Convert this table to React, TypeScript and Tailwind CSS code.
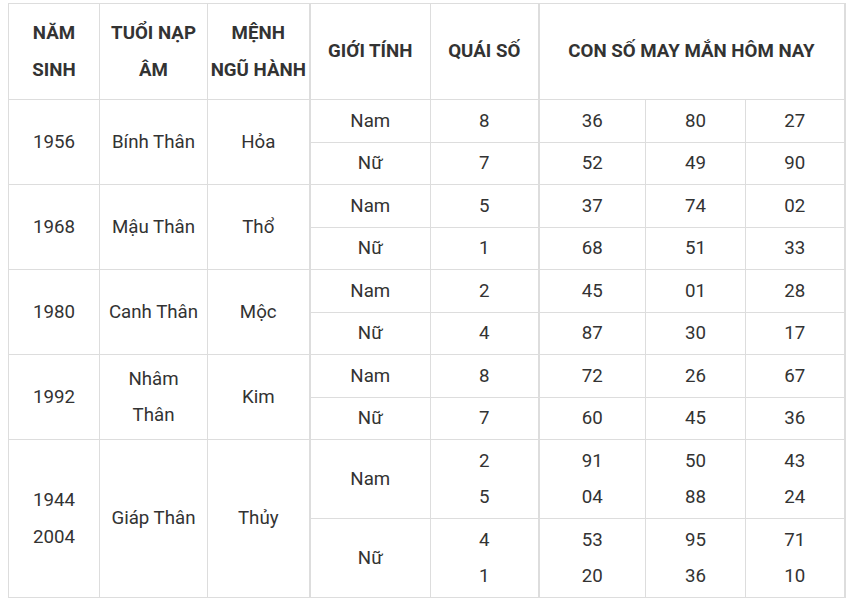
const groups = [
  {
    years: ['1956'],
    napAm: ['Bính Thân'],
    menh: 'Hỏa',
    rows: [
      { gender: 'Nam', quai: ['8'], nums: [['36'], ['80'], ['27']] },
      { gender: 'Nữ', quai: ['7'], nums: [['52'], ['49'], ['90']] },
    ],
  },
  {
    years: ['1968'],
    napAm: ['Mậu Thân'],
    menh: 'Thổ',
    rows: [
      { gender: 'Nam', quai: ['5'], nums: [['37'], ['74'], ['02']] },
      { gender: 'Nữ', quai: ['1'], nums: [['68'], ['51'], ['33']] },
    ],
  },
  {
    years: ['1980'],
    napAm: ['Canh Thân'],
    menh: 'Mộc',
    rows: [
      { gender: 'Nam', quai: ['2'], nums: [['45'], ['01'], ['28']] },
      { gender: 'Nữ', quai: ['4'], nums: [['87'], ['30'], ['17']] },
    ],
  },
  {
    years: ['1992'],
    napAm: ['Nhâm', 'Thân'],
    menh: 'Kim',
    rows: [
      { gender: 'Nam', quai: ['8'], nums: [['72'], ['26'], ['67']] },
      { gender: 'Nữ', quai: ['7'], nums: [['60'], ['45'], ['36']] },
    ],
  },
  {
    years: ['1944', '2004'],
    napAm: ['Giáp Thân'],
    menh: 'Thủy',
    rows: [
      { gender: 'Nam', quai: ['2', '5'], nums: [['91', '04'], ['50', '88'], ['43', '24']] },
      { gender: 'Nữ', quai: ['4', '1'], nums: [['53', '20'], ['95', '36'], ['71', '10']] },
    ],
  },
]

function Lines({ items }: { items: string[] }) {
  return (
    <>
      {items.map((t, i) => (
        <div key={i}>{t}</div>
      ))}
    </>
  )
}

const cell = 'border border-[#dddddd] text-center align-middle p-0'

export default function App() {
  return (
    <div className="bg-white w-[850px] h-[608px] pt-[3px] pl-[8px] font-['Roboto',sans-serif] text-[#333333]">
      <table className="border-collapse table-fixed w-[836px] text-[18.7px] leading-[36.5px]">
        <colgroup>
          <col className="w-[91px]" />
          <col className="w-[108px]" />
          <col className="w-[102px]" />
          <col className="w-[121px]" />
          <col className="w-[108px]" />
          <col className="w-[107px]" />
          <col className="w-[100px]" />
          <col className="w-[99px]" />
        </colgroup>
        <thead>
          <tr className="h-[96px] font-bold">
            <th className={cell}>NĂM<br />SINH</th>
            <th className={cell}>TUỔI NẠP<br />ÂM</th>
            <th className={cell}>MỆNH<br />NGŨ HÀNH</th>
            <th className={`${cell} border-l-2`}>GIỚI TÍNH</th>
            <th className={cell}>QUÁI SỐ</th>
            <th className={`${cell} border-l-2 border-r-2`} colSpan={3}>
              CON SỐ MAY MẮN HÔM NAY
            </th>
          </tr>
        </thead>
        <tbody>
          {groups.map((g, gi) => {
            const last = gi === groups.length - 1
            return g.rows.map((r, ri) => (
              <tr key={`${gi}-${ri}`} className={last ? 'h-[79px]' : ri === 0 ? 'h-[43px]' : 'h-[42px]'}>
                {ri === 0 && (
                  <>
                    <td className={cell} rowSpan={2}>
                      <Lines items={g.years} />
                    </td>
                    <td className={cell} rowSpan={2}>
                      <Lines items={g.napAm} />
                    </td>
                    <td className={cell} rowSpan={2}>
                      {g.menh}
                    </td>
                  </>
                )}
                <td className={`${cell} border-l-2`}>{r.gender}</td>
                <td className={cell}>
                  <Lines items={r.quai} />
                </td>
                {r.nums.map((n, ni) => (
                  <td
                    key={ni}
                    className={`${cell} ${ni === 0 ? 'border-l-2' : ''} ${ni === 2 ? 'border-r-2' : ''}`}
                  >
                    <Lines items={n} />
                  </td>
                ))}
              </tr>
            ))
          })}
        </tbody>
      </table>
    </div>
  )
}
